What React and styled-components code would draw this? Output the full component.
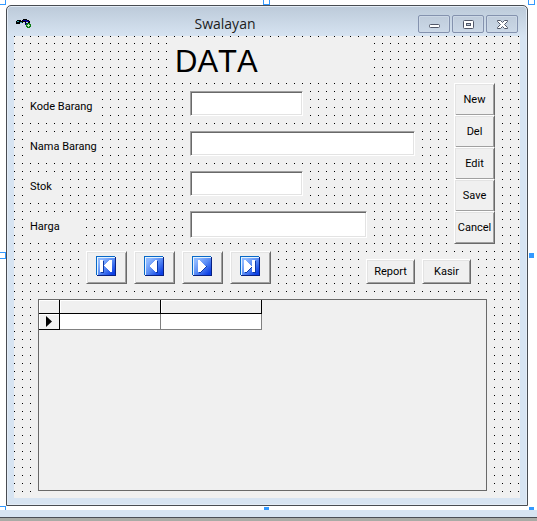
import React from "react";
import styled, { createGlobalStyle } from "styled-components";

const GlobalStyle = createGlobalStyle`
  * {
    box-sizing: border-box;
  }
  body {
    margin: 0;
    background: #fff;
    color: #000;
    font-family: Roboto, "Liberation Sans", Arial, sans-serif;
    font-size: 11px;
  }
`;

const Page = styled.div`
  min-height: 100vh;
  display: flex;
  flex-direction: column;
`;

const Surface = styled.main`
  position: relative;
  flex: 1;
  display: flex;
  padding: 5px 9px 4px 6px;
  overflow: hidden;
`;

// resize handles lie on top of the surface, around the selected form
const Handle = styled.span`
  position: absolute;
  width: 7px;
  height: 7px;
  border: 1px solid #3399ff;
  background: #fff;
  ${({ $solid }) => $solid && "width: 5px; height: 5px; background: #3399ff;"}
  ${({ $place }) => $place}
`;

const handles = [
  { id: "nw", place: "left: -1px; top: -2px;" },
  { id: "n", place: "left: calc(50% - 6px); top: -2px;" },
  { id: "ne", place: "right: 2px; top: -2px;" },
  { id: "w", place: "left: -1px; top: 252px;" },
  { id: "e", place: "right: 3px; top: 253px;", solid: true },
  { id: "sw", place: "left: -1px; bottom: -3px;" },
  { id: "s", place: "left: calc(50% - 5px); bottom: -2px;", solid: true },
  { id: "se", place: "right: 3px; bottom: -2px;", solid: true },
];

const BottomEdge = styled.div`
  height: 11px;
  background: #a9aba6;
  border-top: 7px solid #d7e4f2;

  &::before {
    content: "";
    display: block;
    height: 1px;
    background: #4a4e55;
  }
`;

const Window = styled.section`
  flex: 1;
  display: flex;
  flex-direction: column;
  border: 1px solid #484c52;
  border-radius: 5px 5px 0 0;
  padding: 0 7px 7px;
  background: linear-gradient(#bccad9, #d7e4f2 31px);
  box-shadow: inset 0 0 0 1px #e3ecf6;
`;

const TitleBar = styled.header`
  height: 30px;
  display: flex;
  align-items: center;
  padding: 6px 2px 0;
`;

const Caption = styled.h1`
  flex: 1;
  margin: 0;
  font: 400 14px/24px "Open Sans", "Noto Sans", sans-serif;
  text-align: center;
  color: #1c1c1c;
`;

const CaptionButtons = styled.div`
  display: flex;
  gap: 2px;
`;

const CaptionButton = styled.button`
  display: flex;
  align-items: center;
  justify-content: center;
  width: 32px;
  height: 18px;
  padding: 0;
  border: 1px solid #8492ae;
  border-radius: 2px;
  background: linear-gradient(#bfccdb, #cbd8e7);
  box-shadow: inset 0 0 0 1px #ccd8e6;
`;

// 8px designer grid: one row along the top edge, then the repeating dots
const Client = styled.div`
  --dot: conic-gradient(from 270deg at 1px 1px, #000 90deg, transparent 90deg);
  flex: 1;
  display: flex;
  flex-direction: column;
  padding: 0 0 7px;
  background-color: #f0f0f0;
  background-image: var(--dot), var(--dot);
  background-size: 8px 8px;
  background-position: 0 0, 0 -1px;
  background-repeat: repeat-x, repeat;
`;

const Heading = styled.h2`
  width: 200px;
  height: 38px;
  margin: 7px 0 2px 160px;
  padding-left: 1px;
  background: #f0f0f0;
  font: 400 31px/38px "Liberation Sans", Arial, sans-serif;
  font-kerning: none;
`;

const Upper = styled.div`
  display: flex;
  align-items: flex-start;
  justify-content: space-between;
  padding: 0 25px 0 16px;
`;

const Form = styled.form`
  padding-top: 8px;
`;

const Field = styled.div`
  display: grid;
  grid-template-columns: 160px auto;
  align-items: start;
  height: 40px;
`;

const Label = styled.label`
  width: ${({ $width }) => $width}px;
  height: 26px;
  margin-top: 4px;
  background: #f0f0f0;
  line-height: 24px;
  white-space: nowrap;
`;

const TextBox = styled.input`
  width: ${({ $width }) => $width}px;
  height: ${({ $tall }) => ($tall ? 27 : 25)}px;
  padding: 2px 3px;
  border: 1px solid;
  border-color: #a0a0a0 #fff #fff #a0a0a0;
  border-radius: 0;
  outline: none;
  background: #fff;
  box-shadow: inset 1px 1px #696969, inset -1px -1px #e3e3e3;
  font: inherit;
`;

const PushButton = styled.button`
  display: flex;
  align-items: center;
  justify-content: center;
  width: ${({ $wide }) => ($wide ? 49 : 41)}px;
  height: ${({ $wide }) => ($wide ? 25 : 33)}px;
  padding: ${({ $glyph }) => ($glyph ? "0 1px 3px 0" : "0")};
  border: 1px solid;
  border-color: #fff #696969 #696969 #fff;
  background: #f0f0f0;
  box-shadow: inset 1px 1px #e3e3e3, inset -1px -1px #a0a0a0;
  color: #000;
  font: inherit;
`;

const SideButtons = styled.div`
  display: flex;
  flex-direction: column;

  ${PushButton} + ${PushButton} {
    margin-top: -1px;
  }
`;

const Toolbar = styled.div`
  display: flex;
  align-items: flex-end;
  gap: 7px;
  padding: 0 49px 15px 72px;
`;

const Spacer = styled.div`
  flex: 1;
`;

const GridBox = styled.div`
  flex: 1;
  min-height: 120px;
  margin: 0 33px 0 24px;
  border: 1px solid #696969;
  background: #f0f0f0;
  box-shadow: 0 1px #f0f0f0;
`;

const Table = styled.table`
  border-collapse: separate;
  border-spacing: 0;
  table-layout: fixed;
  width: 223px;

  th,
  td {
    padding: 0;
    border: solid #808080;
    border-width: 0 1px 1px 0;
    background: #fff;
  }
  th {
    height: 14px;
    border-color: #000;
    background: #f0f0f0;
    box-shadow: inset 1px 1px #fff;
  }
  td {
    height: 16px;
  }
  tbody th {
    height: 16px;
  }
  th:first-child {
    width: 21px;
  }
  svg {
    display: block;
    margin-left: 7px;
  }
`;

const AppIcon = () => (
  <svg width="16" height="12" viewBox="0 0 16 12" shapeRendering="crispEdges">
    <path d="M0 3h1v-1h4v1h1v-1h1v-1h4v1h2v1h1v2h-2v-1h-2v2h-1v-2h-2v1h-3v1h-5v-1h-1z" fill="#000" />
    <path d="M1 3h2v1h-2zM4 4h2v1h-2z" fill="#38a8b0" />
    <path d="M7 2h4v1h2v1h-3v-1h-3z" fill="#0000a0" />
    <path d="M9 5h2v3h-1v-1h-1z" fill="#000070" />
    <path d="M11 5h3v1h1v3h-1v1h-3v-1h-1v-3h1z" fill="#0a7a12" />
    <path d="M12 6h1v1h1v1h-1v1h-1v-1h-1v-1h1z" fill="#b8f0b8" />
  </svg>
);

const captionIcons = {
  Minimize: (
    <rect x="1.5" y="5.5" width="10" height="3" rx="1" fill="#fff" stroke="#515768" />
  ),
  Maximize: (
    <>
      <rect x="1.5" y="1.5" width="10" height="8" rx="1" fill="#fff" stroke="#515768" />
      <rect x="4.5" y="4.5" width="4" height="2" fill="#bdcad9" stroke="#515768" />
    </>
  ),
  Close: (
    <path
      d="M1.5 1.5h3l2 2 2-2h3v1l-3 3 3 3v1h-3l-2-2-2 2h-3v-1l3-3-3-3z"
      fill="#fff"
      stroke="#515768"
    />
  ),
};

const navShapes = {
  First: { white: "M4 4h3v12h-3zM14 4h2v12h-2v-1h-1v-1h-1v-1h-1v-1h-1v-1h-1v-1h-1v-1h1v-1h1v-1h1v-1h1v-1h1v-1h1z", dark: "M7 5h1v12h-3v-1h2z" },
  Previous: { white: "M11 4h2v12h-2v-1h-1v-1h-1v-1h-1v-1h-1v-1h-1v-2h1v-1h1v-1h1v-1h1v-1h1z", dark: "M13 5h1v12h-2v-1h1z" },
  Next: { white: "M6 4h2v1h1v1h1v1h1v1h1v1h1v1h1v1h-1v1h-1v1h-1v1h-1v1h-1v1h-3z", dark: "M14 10h1v1h-1v1h-1v1h-1v1h-1v1h-1v1h-1v1h-2v-1h2v-1h1v-1h1v-1h1v-1h1v-1h1z" },
  Last: { white: "M4 4h2v1h1v1h1v1h1v1h1v1h1v1h1v1h-1v1h-1v1h-1v1h-1v1h-1v1h-3zM12 4h3v12h-3z", dark: "M15 5h1v12h-3v-1h2zM12 11v1h-1v1h-1v1h-1v1h-1v1h-1v1h-2v-1h2v-1h1v-1h1v-1h1v-1h1v-1z" },
};

const NavIcon = ({ name }) => (
  <svg width="20" height="20" viewBox="0 0 20 20" shapeRendering="crispEdges">
    <defs>
      <linearGradient id={`blue-${name}`} x1="0" y1="0" x2="1" y2="1">
        <stop offset="0.15" stopColor="#8fb8ff" />
        <stop offset="0.5" stopColor="#5a8cf4" />
        <stop offset="0.9" stopColor="#0c3fe4" />
      </linearGradient>
    </defs>
    <rect x="1" y="1" width="19" height="19" fill="#082080" />
    <rect width="19" height="19" fill="#0868c8" />
    <rect x="1" y="1" width="18" height="18" fill="#e4f4ff" />
    <rect x="2" y="2" width="17" height="17" fill={`url(#blue-${name})`} />
    <path d={navShapes[name].dark} fill="#0c38a8" />
    <path d={navShapes[name].white} fill="#fff" />
  </svg>
);

const fields = [
  { id: "kode", label: "Kode Barang", labelWidth: 72, width: 113 },
  { id: "nama", label: "Nama Barang", labelWidth: 72, width: 225 },
  { id: "stok", label: "Stok", labelWidth: 32, width: 113 },
  { id: "harga", label: "Harga", labelWidth: 56, width: 177, tall: true },
];

const actions = ["New", "Del", "Edit", "Save", "Cancel"];

function App() {
  return (
    <>
      <GlobalStyle />
      <Page>
        <Surface>
          <Window>
            <TitleBar>
              <AppIcon />
              <Caption>Swalayan</Caption>
              <CaptionButtons>
                {Object.keys(captionIcons).map((name) => (
                  <CaptionButton key={name} type="button" aria-label={name}>
                    <svg width="13" height="11" viewBox="0 0 13 11">
                      {captionIcons[name]}
                    </svg>
                  </CaptionButton>
                ))}
              </CaptionButtons>
            </TitleBar>
            <Client>
              <Heading>DATA</Heading>
              <Upper>
                <Form onSubmit={(e) => e.preventDefault()}>
                  {fields.map((field) => (
                    <Field key={field.id}>
                      <Label htmlFor={field.id} $width={field.labelWidth}>
                        {field.label}
                      </Label>
                      <TextBox id={field.id} type="text" $width={field.width} $tall={field.tall} />
                    </Field>
                  ))}
                </Form>
                <SideButtons>
                  {actions.map((action) => (
                    <PushButton key={action} type="button">
                      {action}
                    </PushButton>
                  ))}
                </SideButtons>
              </Upper>
              <Toolbar>
                {Object.keys(navShapes).map((name) => (
                  <PushButton key={name} type="button" aria-label={name} $glyph>
                    <NavIcon name={name} />
                  </PushButton>
                ))}
                <Spacer />
                <PushButton type="button" $wide>
                  Report
                </PushButton>
                <PushButton type="button" $wide>
                  Kasir
                </PushButton>
              </Toolbar>
              <GridBox>
                <Table aria-label="Data barang">
                  <thead>
                    <tr>
                      <th />
                      <th />
                      <th />
                    </tr>
                  </thead>
                  <tbody>
                    <tr>
                      <th scope="row">
                        <svg width="6" height="11" viewBox="0 0 6 11">
                          <path d="M0 0l6 5.5-6 5.5z" />
                        </svg>
                      </th>
                      <td />
                      <td />
                    </tr>
                  </tbody>
                </Table>
              </GridBox>
            </Client>
          </Window>
          {handles.map((h) => (
            <Handle key={h.id} $place={h.place} $solid={h.solid} />
          ))}
        </Surface>
        <BottomEdge />
      </Page>
    </>
  );
}

export default App;
